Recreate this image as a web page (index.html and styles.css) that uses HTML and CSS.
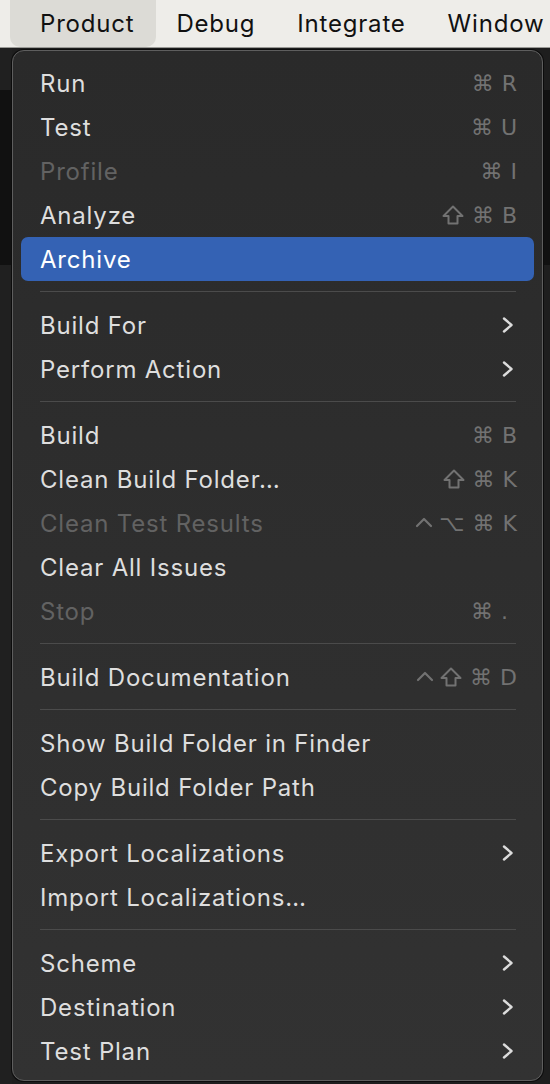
FILE: index.html
```html
<!DOCTYPE html>
<html lang="en">
<head>
  <meta charset="UTF-8" />
  <meta name="viewport" content="width=device-width, initial-scale=1.0" />
  <title>Product Menu</title>
  <link rel="stylesheet" href="styles.css">
</head>
<body>

  <!-- Menu Bar -->
  <nav class="menubar">
    <span class="menubar-item active">Product</span>
    <span class="menubar-item">Debug</span>
    <span class="menubar-item">Integrate</span>
    <span class="menubar-item">Window</span>
  </nav>

  <!-- Product Menu -->
  <div class="menu">
    <div class="item"><span>Run</span><span class="keys"><span>⌘</span><span>R</span></span></div>
    <div class="item"><span>Test</span><span class="keys"><span>⌘</span><span>U</span></span></div>
    <div class="item disabled"><span>Profile</span><span class="keys"><span>⌘</span><span>I</span></span></div>
    <div class="item"><span>Analyze</span><span class="keys"><svg class="key-shift" viewBox="0 0 22 20"><path d="M11 1.5 L20.5 11 L15.5 11 L15.5 18.5 L6.5 18.5 L6.5 11 L1.5 11 Z" /></svg><span>⌘</span><span>B</span></span></div>
    <div class="item selected"><span>Archive</span></div>
    <div class="sep"></div>

    <div class="item"><span>Build For</span><svg class="chev" viewBox="0 0 12 16"><path d="M2 1.5 L9.5 8 L2 14.5" /></svg></div>
    <div class="item"><span>Perform Action</span><svg class="chev" viewBox="0 0 12 16"><path d="M2 1.5 L9.5 8 L2 14.5" /></svg></div>
    <div class="sep"></div>

    <div class="item"><span>Build</span><span class="keys"><span>⌘</span><span>B</span></span></div>
    <div class="item"><span>Clean Build Folder…</span><span class="keys"><svg class="key-shift" viewBox="0 0 22 20"><path d="M11 1.5 L20.5 11 L15.5 11 L15.5 18.5 L6.5 18.5 L6.5 11 L1.5 11 Z" /></svg><span>⌘</span><span>K</span></span></div>
    <div class="item disabled"><span>Clean Test Results</span><span class="keys"><svg class="key-ctrl" viewBox="0 0 18 20"><path d="M2 13 L9 6 L16 13" /></svg><span>⌥</span><span>⌘</span><span>K</span></span></div>
    <div class="item"><span>Clear All Issues</span></div>
    <div class="item disabled"><span>Stop</span><span class="keys"><span>⌘</span><span class="dot">.</span></span></div>
    <div class="sep"></div>

    <div class="item"><span>Build Documentation</span><span class="keys"><svg class="key-ctrl" viewBox="0 0 18 20"><path d="M2 13 L9 6 L16 13" /></svg><svg class="key-shift" viewBox="0 0 22 20"><path d="M11 1.5 L20.5 11 L15.5 11 L15.5 18.5 L6.5 18.5 L6.5 11 L1.5 11 Z" /></svg><span>⌘</span><span>D</span></span></div>
    <div class="sep"></div>

    <div class="item"><span>Show Build Folder in Finder</span></div>
    <div class="item"><span>Copy Build Folder Path</span></div>
    <div class="sep"></div>

    <div class="item"><span>Export Localizations</span><svg class="chev" viewBox="0 0 12 16"><path d="M2 1.5 L9.5 8 L2 14.5" /></svg></div>
    <div class="item"><span>Import Localizations…</span></div>
    <div class="sep"></div>

    <div class="item"><span>Scheme</span><svg class="chev" viewBox="0 0 12 16"><path d="M2 1.5 L9.5 8 L2 14.5" /></svg></div>
    <div class="item"><span>Destination</span><svg class="chev" viewBox="0 0 12 16"><path d="M2 1.5 L9.5 8 L2 14.5" /></svg></div>
    <div class="item"><span>Test Plan</span><svg class="chev" viewBox="0 0 12 16"><path d="M2 1.5 L9.5 8 L2 14.5" /></svg></div>
  </div>

</body>
</html>
```

FILE: styles.css
```css
body {
  margin: 0;
  font-family: Inter, "Noto Sans", sans-serif;
  letter-spacing: 0.8px;
  background-color: #1e1e1e;
  background-image:
    linear-gradient(to bottom, transparent 90px, #111 90px, #111 265px, transparent 265px),
    linear-gradient(to right, #202020 12px, transparent 12px);
  height: 1084px;
  overflow: hidden;
}

.menubar {
  display: flex;
  align-items: center;
  height: 47px;
  background: #eeede9;
  border-bottom: 1px solid #9a9a96;
  font-size: 24px;
  color: #111;
  white-space: nowrap;
}

.menubar-item {
  height: 47px;
  display: flex;
  align-items: center;
  padding: 0 21px;
}

.menubar-item.active {
  margin-left: 10px;
  margin-right: -1px;
  padding: 0 22px 0 30px;
  background: #dcdbd6;
  border-radius: 0 0 10px 10px;
}

.menu {
  margin: 2px 7px 0 12px;
  padding: 10px 8px 7px;
  background: linear-gradient(to bottom, #2a2a2a, #323232);
  border: 1px solid #5e5e5e;
  border-radius: 12px;
  box-shadow: 0 0 0 1px #0c0c0c;
  color: #dedede;
  font-size: 24px;
}

.item {
  height: 44px;
  display: flex;
  align-items: center;
  justify-content: space-between;
  padding: 0 17px 0 19px;
  border-radius: 7px;
}

.item.selected {
  background: #3462b4;
  color: #fff;
}

.item.disabled {
  color: #626262;
}

.keys {
  display: flex;
  align-items: center;
  gap: 8px;
  color: #727272;
  font-family: "DejaVu Sans", sans-serif;
  font-size: 22px;
  letter-spacing: 0;
}

.keys .dot {
  width: 16px;
}

.key-shift {
  width: 22px;
  height: 20px;
  fill: none;
  stroke: #727272;
  stroke-width: 2;
  stroke-linejoin: round;
}

.key-ctrl {
  width: 18px;
  height: 20px;
  margin-right: -2px;
  fill: none;
  stroke: #727272;
  stroke-width: 2.2;
  stroke-linecap: round;
  stroke-linejoin: round;
}

.chev {
  width: 12px;
  height: 16px;
  margin-right: 3px;
  fill: none;
  stroke: #dcdcdc;
  stroke-width: 2.4;
  stroke-linecap: round;
  stroke-linejoin: round;
}

.sep {
  height: 1px;
  margin: 10px 18px 11px 19px;
  background: #4b4b4b;
}
```
